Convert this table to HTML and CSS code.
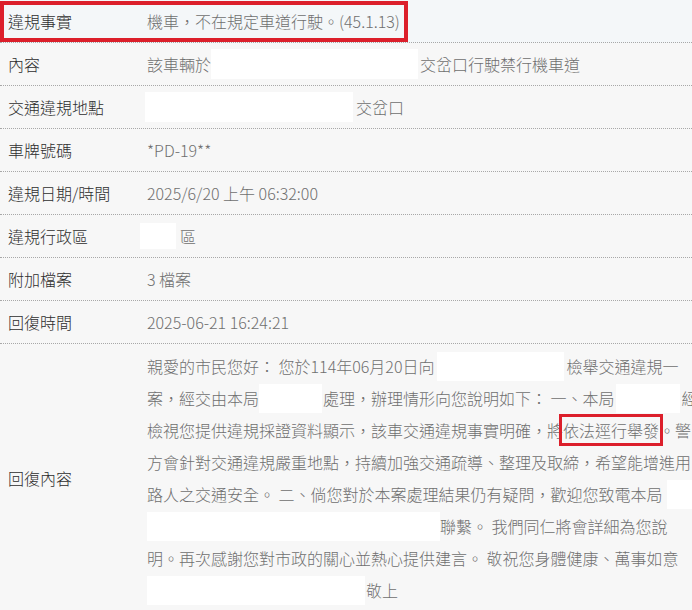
FILE: index.html
```html
<!DOCTYPE html>
<html lang="zh-Hant">
<head>
<meta charset="utf-8">
<title>違規檢舉回復</title>
<link rel="stylesheet" href="styles.css">
</head>
<body>
<div class="table">
  <div class="row marked">
    <div class="label">違規事實</div>
    <div class="value">機車，不在規定車道行駛。(45.1.13)</div>
  </div>
  <div class="row">
    <div class="label">內容</div>
    <div class="value">該車輛於<span class="redact r-road"></span>交岔口行駛禁行機車道</div>
  </div>
  <div class="row">
    <div class="label">交通違規地點</div>
    <div class="value"><span class="redact r-place"></span>交岔口</div>
  </div>
  <div class="row">
    <div class="label">車牌號碼</div>
    <div class="value">*PD-19**</div>
  </div>
  <div class="row">
    <div class="label">違規日期/時間</div>
    <div class="value">2025/6/20 上午 06:32:00</div>
  </div>
  <div class="row">
    <div class="label">違規行政區</div>
    <div class="value"><span class="redact r-dist"></span>區</div>
  </div>
  <div class="row">
    <div class="label">附加檔案</div>
    <div class="value">3 檔案</div>
  </div>
  <div class="row">
    <div class="label">回復時間</div>
    <div class="value">2025-06-21 16:24:21</div>
  </div>
  <div class="row reply">
    <div class="label">回復內容</div>
    <div class="value lines">
      <div class="line">親愛的市民您好： 您於114年06月20日向<span class="redact r-l1"></span>檢舉交通違規一</div>
      <div class="line">案，經交由本局<span class="redact r-l2a"></span>處理，辦理情形向您說明如下： 一、本局<span class="redact r-l2b"></span>經</div>
      <div class="line">檢視您提供違規採證資料顯示，該車交通違規事實明確，將<span class="mark">依法逕行舉發</span>。警</div>
      <div class="line">方會針對交通違規嚴重地點，持續加強交通疏導、整理及取締，希望能增進用</div>
      <div class="line">路人之交通安全。 二、倘您對於本案處理結果仍有疑問，歡迎您致電本局<span class="redact r-l5"></span></div>
      <div class="line"><span class="redact r-l6"></span>聯繫。 我們同仁將會詳細為您說</div>
      <div class="line">明。再次感謝您對市政的關心並熱心提供建言。 敬祝您身體健康、萬事如意</div>
      <div class="line"><span class="redact r-l8"></span>敬上</div>
    </div>
  </div>
</div>
</body>
</html>
```

FILE: styles.css
```css
html, body {
  margin: 0;
  padding: 0;
  background: #f7f7f7;
  overflow: hidden;
}

body {
  font-family: "Noto Sans CJK TC", "Noto Sans", sans-serif;
  font-size: 16px;
  font-weight: 300;
  color: #333;
}

.table {
  display: flex;
  flex-direction: column;
  width: 100%;
}

.row {
  display: grid;
  grid-template-columns: 147px minmax(0, 1fr);
  align-items: center;
  height: 42px;
  border-bottom: 1px dotted #a8a8a8;
  position: relative;
}

.label {
  padding-left: 8px;
  color: #2e2e2e;
  white-space: nowrap;
}

.value {
  color: #6f6f6f;
  white-space: nowrap;
  display: flex;
  align-items: center;
}

.marked {
  background: #f4f7f9;
}

.marked::after {
  content: "";
  position: absolute;
  left: 0;
  top: 1px;
  width: 408px;
  height: 41px;
  box-sizing: border-box;
  border: 4px solid #dc1f2b;
}

.redact {
  display: inline-block;
  background: #ffffff;
  height: 30px;
  flex: none;
}

.r-road { width: 207px; margin-right: 2px; }
.r-place { width: 208px; margin-left: -2px; margin-right: 3px; }
.r-dist { width: 36px; margin-left: -7px; margin-right: 4px; height: 26px; }

.reply {
  height: auto;
  padding: 6px 0 6px;
  border-bottom: none;
}

.lines {
  display: flex;
  flex-direction: column;
  align-items: stretch;
  overflow: hidden;
  padding-top: 3px;
  margin-top: -3px;
  padding-bottom: 3px;
  margin-bottom: -3px;
}

.line {
  display: flex;
  align-items: center;
  height: 32px;
  line-height: 32px;
  white-space: nowrap;
}

.r-l1 { width: 127px; margin: 0 2px 0 3px; height: 29px; }
.r-l2a { width: 63px; margin: 0 1px 0 0; height: 29px; }
.r-l2b { width: 64px; margin: 0 2px 0 1px; height: 29px; }
.r-l5 { width: 40px; margin-left: 4px; height: 29px; }
.r-l6 { width: 293px; height: 29px; }
.r-l8 { width: 218px; margin-right: 1px; height: 29px; }

.mark {
  outline: 3px solid #dc1f2b;
  outline-offset: 0px;
  line-height: 26px;
  padding: 0 1px;
  margin: 0 -1px;
}
```
